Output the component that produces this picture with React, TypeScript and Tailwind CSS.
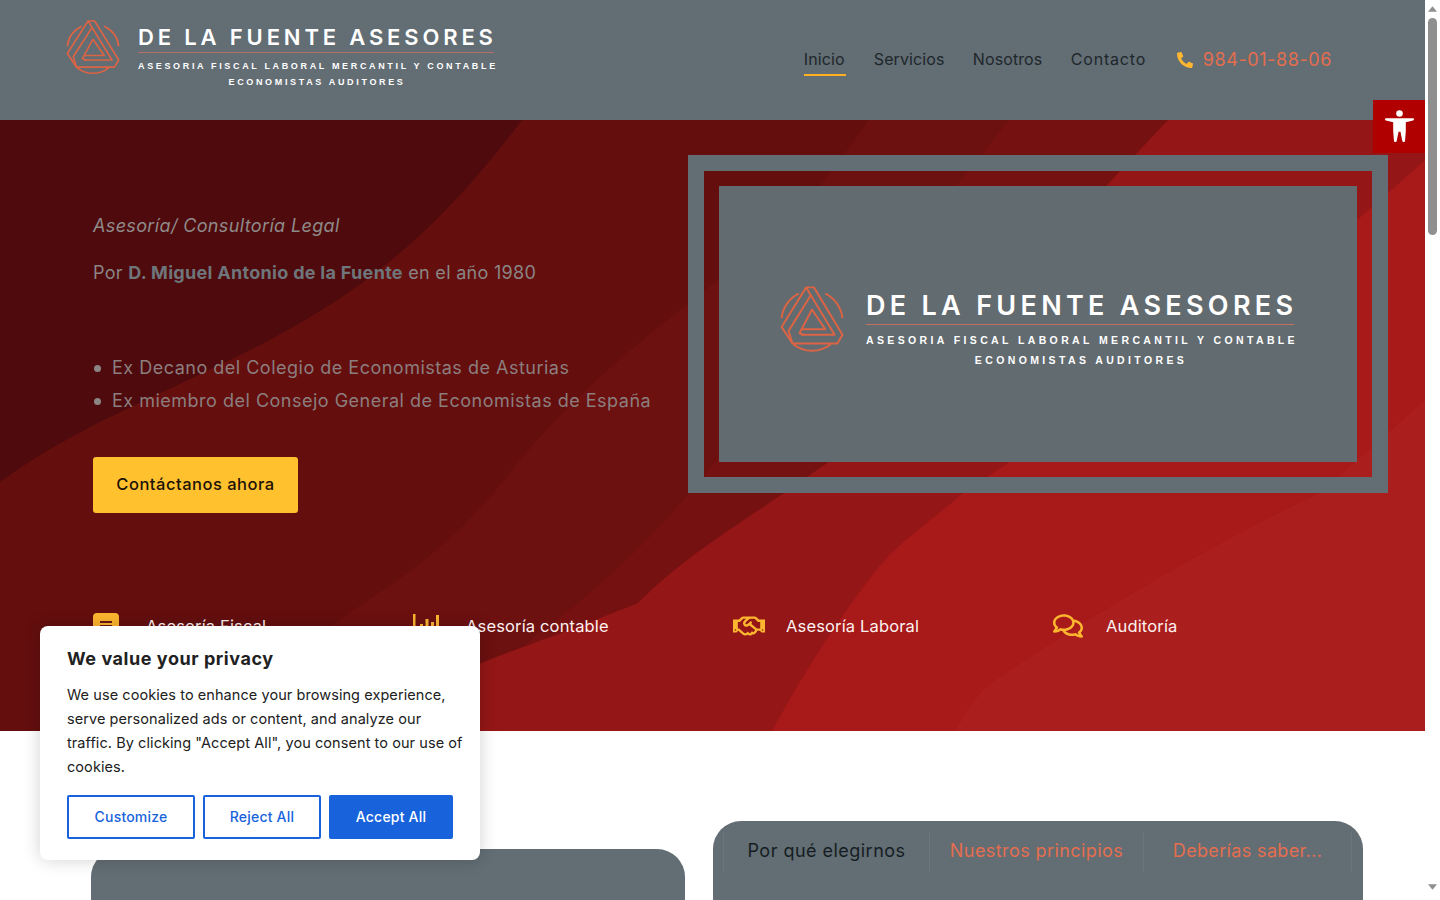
import { FaPhoneAlt, FaRegComments, FaRegHandshake } from 'react-icons/fa';

function Emblem({ className }: { className: string }) {
  return (
    <svg viewBox="18 24 164 172" preserveAspectRatio="none" className={className} fill="none" stroke="#dc6444" strokeWidth="5" strokeLinejoin="round">
      <path d="M52 174a78 78 0 0 0 96 0" />
      <path d="M66 46a78 78 0 0 0-44 62M134 46a78 78 0 0 1 44 62" />
      <path d="M85 30h20l73 120-13 22H50L22 130Z" />
      <path d="M85 30l12 20-57 90 10 32" />
      <path d="M97 50l61 100H72" />
      <path d="M100 86l-32 60 12 4M100 86l34 50H74" />
    </svg>
  );
}

function Logo({ large }: { large?: boolean }) {
  return (
    <div className={large ? 'flex items-start gap-[22px] font-[Inter,sans-serif] text-white' : 'flex items-start gap-[18px] font-[Inter,sans-serif] text-white'}>
      <Emblem className={large ? 'w-[64px] h-[68px]' : 'w-[54px] h-[56px]'} />
      <div className={large ? 'w-[430px] pt-[6px]' : 'w-[358px] pt-[6px]'}>
        <div className={large ? 'text-[27px] leading-[30px] font-semibold tracking-[4.3px] whitespace-nowrap' : 'text-[22px] leading-[24px] font-semibold tracking-[3.85px] whitespace-nowrap'}>
          DE LA FUENTE ASESORES
        </div>
        <div className={large ? 'h-[1px] bg-[#c0705f] mt-[3px] w-[428px]' : 'h-[1px] bg-[#b5706a] mt-[3px] w-[356px]'}></div>
        <div className={large ? 'text-[10.5px] leading-[13px] font-bold tracking-[3.37px] whitespace-nowrap mt-[9px] font-[Liberation_Sans,sans-serif]' : 'text-[9px] leading-[11px] font-bold tracking-[2.65px] whitespace-nowrap mt-[8px] font-[Liberation_Sans,sans-serif]'}>
          ASESORIA FISCAL LABORAL MERCANTIL Y CONTABLE
        </div>
        <div className={large ? 'text-[10.5px] leading-[13px] font-bold tracking-[3.37px] whitespace-nowrap mt-[7px] text-center font-[Liberation_Sans,sans-serif]' : 'text-[9px] leading-[11px] font-bold tracking-[2.65px] whitespace-nowrap mt-[5px] text-center font-[Liberation_Sans,sans-serif]'}>
          ECONOMISTAS AUDITORES
        </div>
      </div>
    </div>
  );
}

function HeroWaves() {
  return (
    <svg viewBox="0 120 1425 611" preserveAspectRatio="none" className="absolute inset-0 w-full h-full">
      <rect x="0" y="120" width="1425" height="611" fill="#4e0a0c" />
      <path d="M522 120C450 215 380 285 250 350C150 400 70 430 0 482V731H1425V120Z" fill="#640e0e" />
      <path d="M869 120L831 171C760 270 620 330 504 480C440 560 380 590 332 625L250 731H1425V120Z" fill="#6c1010" />
      <path d="M1009 120C900 260 800 360 700 480C660 530 600 590 530 640L440 731H1425V120Z" fill="#761111" />
      <path d="M1168 120L1107 185C1020 290 920 380 827 463L784 493C730 530 680 560 638 603L600 618C560 635 510 650 470 668V731H1425V120Z" fill="#941616" />
      <path d="M1425 160L1388 193L1357 220C1240 310 1110 380 1008 463L963 493C920 530 895 545 874 573C830 630 800 680 772 731H1425Z" fill="#a81919" />
      <path d="M1425 400L1320 493C1220 540 1100 610 1000 677C980 690 965 710 956 731H1425Z" fill="#aa1e1d" />
    </svg>
  );
}

function NoteIcon() {
  return (
    <svg viewBox="0 0 26 28" className="w-[26px] h-[28px] mt-[1px]">
      <path d="M4 0h18a4 4 0 0 1 4 4v16l-8 8H4a4 4 0 0 1-4-4V4a4 4 0 0 1 4-4Z" fill="#fdb62f" />
      <path d="M7 9h12M7 13h12M7 17h8" stroke="#6a1a10" strokeWidth="2" />
    </svg>
  );
}

function BarsIcon() {
  return (
    <svg viewBox="0 0 26 24" className="w-[26px] h-[24px]" fill="#fdb62f">
      <rect x="0" y="0" width="2.5" height="24" />
      <rect x="0" y="21.5" width="26" height="2.5" />
      <rect x="7" y="10" width="3" height="12" />
      <rect x="12.5" y="5" width="3" height="17" />
      <rect x="18" y="8" width="3" height="14" />
      <rect x="23" y="1" width="3" height="21" />
    </svg>
  );
}

function Feature({ icon, label }: { icon: React.ReactNode; label: string }) {
  return (
    <div className="flex items-center h-[32px]">
      <div className="w-[53px] shrink-0 flex items-center text-[#fdb62f]">{icon}</div>
      <span className="text-[16.5px] text-[#fdf1f0] whitespace-nowrap tracking-[0.15px]">{label}</span>
    </div>
  );
}

export default function App() {
  return (
    <div className="relative flex w-[1440px] h-screen overflow-hidden bg-white font-[Inter,sans-serif]">
      <main className="w-[1425px] shrink-0">
        {/* Header */}
        <header className="h-[120px] bg-[#626d74] flex items-start justify-between pl-[66px]">
          <div className="pt-[19px]">
            <Logo />
          </div>
          <nav className="flex items-center gap-[28px] pt-[44px] pr-[93px] text-[16px] text-[#20272b]">
            <a className="h-[32px] leading-[30px] border-b-2 border-[#ffb020] tracking-[0.1px] w-[42px] whitespace-nowrap">Inicio</a>
            <a className="h-[32px] leading-[30px] w-[71px] whitespace-nowrap tracking-[0.1px]">Servicios</a>
            <a className="h-[32px] leading-[30px] w-[70px] whitespace-nowrap tracking-[0.1px]">Nosotros</a>
            <a className="h-[32px] leading-[30px] w-[76px] whitespace-nowrap tracking-[0.8px]">Contacto</a>
            <div className="flex items-center gap-[10px] h-[32px] pl-[2px]">
              <FaPhoneAlt className="text-[#fdb62f] w-[16px] h-[16px]" />
              <span className="text-[18px] leading-[30px] text-[#e56e4e] tracking-[0.58px] whitespace-nowrap">984-01-88-06</span>
            </div>
          </nav>
        </header>

        {/* Hero */}
        <section className="relative h-[611px] overflow-hidden">
          <HeroWaves />
          <div className="relative flex h-[490px]">
            <div className="w-[688px] pl-[93px] pt-[92px] shrink-0 text-[18px] leading-[28px]">
              <p className="italic text-[#8f8a8a] tracking-[0.36px]">Asesoría/ Consultoría Legal</p>
              <p className="mt-[19px] text-[#8a8585] tracking-[0.3px]">
                Por <strong className="font-bold text-[#6f767b]">D. Miguel Antonio de la Fuente</strong> en el año 1980
              </p>
              <ul className="mt-[67px] space-y-[5px] text-[#8c7e7e] tracking-[0.5px]">
                <li className="flex items-center whitespace-nowrap">
                  <span className="w-[7px] h-[7px] rounded-full bg-[#8c8585] ml-[1px] mr-[11px]"></span>
                  Ex Decano del Colegio de Economistas de Asturias
                </li>
                <li className="flex items-center whitespace-nowrap">
                  <span className="w-[7px] h-[7px] rounded-full bg-[#8c8585] ml-[1px] mr-[11px]"></span>
                  Ex miembro del Consejo General de Economistas de España
                </li>
              </ul>
              <a className="mt-[42px] flex items-center justify-center w-[205px] h-[56px] rounded-[3px] bg-[#ffc12e] text-[16.5px] font-medium text-[#1c1208] tracking-[0.5px] pb-[2px]">
                Contáctanos ahora
              </a>
            </div>
            <div className="mt-[35px] w-[700px] h-[338px] border-[16px] border-[#626d74] p-[15px]">
              <div className="h-full bg-[#626b70] flex justify-center pt-[99px]">
                <Logo large />
              </div>
            </div>
          </div>
          <div className="relative grid grid-cols-[320px_320px_320px_320px] pl-[93px]">
            <Feature icon={<NoteIcon />} label="Asesoría Fiscal" />
            <Feature icon={<BarsIcon />} label="Asesoría contable" />
            <Feature icon={<FaRegHandshake className="w-[32px] h-[28px]" />} label="Asesoría Laboral" />
            <Feature icon={<FaRegComments className="w-[30px] h-[28px]" />} label="Auditoría" />
          </div>
        </section>

        {/* Lower cards */}
        <section className="flex items-start pl-[91px] gap-[28px]">
          <div className="w-[594px] h-[60px] mt-[118px] rounded-t-[28px] bg-[#626d74]"></div>
          <div className="w-[650px] h-[100px] mt-[90px] rounded-t-[28px] bg-[#626d74] pt-[11px] pl-[10px]">
            <div className="flex h-[40px] text-[18px] leading-[38px] text-center whitespace-nowrap">
              <div className="w-[207px] border-x border-[#6b757b] text-[#161d22] tracking-[0.47px]">Por qué elegirnos</div>
              <div className="w-[214px] border-r border-[#6b757b] text-[#e56e4e] tracking-[0.42px]">Nuestros principios</div>
              <div className="w-[208px] border-r border-[#6b757b] text-[#e56e4e] tracking-[0.35px]">Deberías saber...</div>
            </div>
          </div>
        </section>
      </main>

      {/* Scrollbar */}
      <aside className="w-[15px] shrink-0 bg-white relative flex flex-col items-center">
        <svg viewBox="0 0 10 6" className="w-[9px] h-[6px] mt-[6px]" fill="#8f8f8f"><path d="M5 0l5 6H0Z" /></svg>
        <div className="w-[9px] h-[217px] mt-[6px] rounded-full bg-[#8f8f8f]"></div>
        <svg viewBox="0 0 10 6" className="w-[9px] h-[6px] mt-[649px]" fill="#8f8f8f"><path d="M0 0h10L5 6Z" /></svg>
      </aside>

      {/* Accessibility button */}
      <button className="absolute left-[1373px] top-[100px] w-[52px] h-[53px] bg-[#b00000] flex items-center justify-center">
        <svg viewBox="0 0 32 34" className="w-[31px] h-[33px]" fill="#ffffff">
          <circle cx="16" cy="3.600" r="3.400" />
          <path d="M2 8.500h28c1.300 0 1.300 2 0 2.300L22.500 12.500V22l-.8 10c-.1 1.500-2.600 1.500-2.800 0L17 22.500h-2L13.100 32c-.2 1.500-2.700 1.500-2.800 0L9.500 22v-9.500L2 10.800c-1.300-.3-1.300-2.300 0-2.300Z" />
        </svg>
      </button>

      {/* Cookie banner */}
      <div className="absolute left-[40px] top-[626px] w-[440px] h-[234px] rounded-lg bg-white shadow-[0_0_18px_rgba(0,0,0,0.18)] px-[27px] pt-[21px]">
        <h2 className="text-[18px] leading-[24px] font-bold text-[#212121] tracking-[0.55px]">We value your privacy</h2>
        <p className="mt-[12px] w-[398px] text-[14.5px] leading-[24px] text-[#212121] tracking-[0.07px]">
          We use cookies to enhance your browsing experience, serve personalized ads or content, and analyze our traffic. By clicking "Accept All", you consent to our use of cookies.
        </p>
        <div className="flex gap-[8px] mt-[16px] text-[14px] font-medium tracking-[0.2px]">
          <button className="w-[128px] h-[44px] rounded-[2px] border-2 border-[#1863dc] text-[#1863dc] pb-[1px]">Customize</button>
          <button className="w-[118px] h-[44px] rounded-[2px] border-2 border-[#1863dc] text-[#1863dc] pb-[1px]">Reject All</button>
          <button className="w-[124px] h-[44px] rounded-[2px] bg-[#1863dc] text-white pb-[1px]">Accept All</button>
        </div>
      </div>
    </div>
  );
}
